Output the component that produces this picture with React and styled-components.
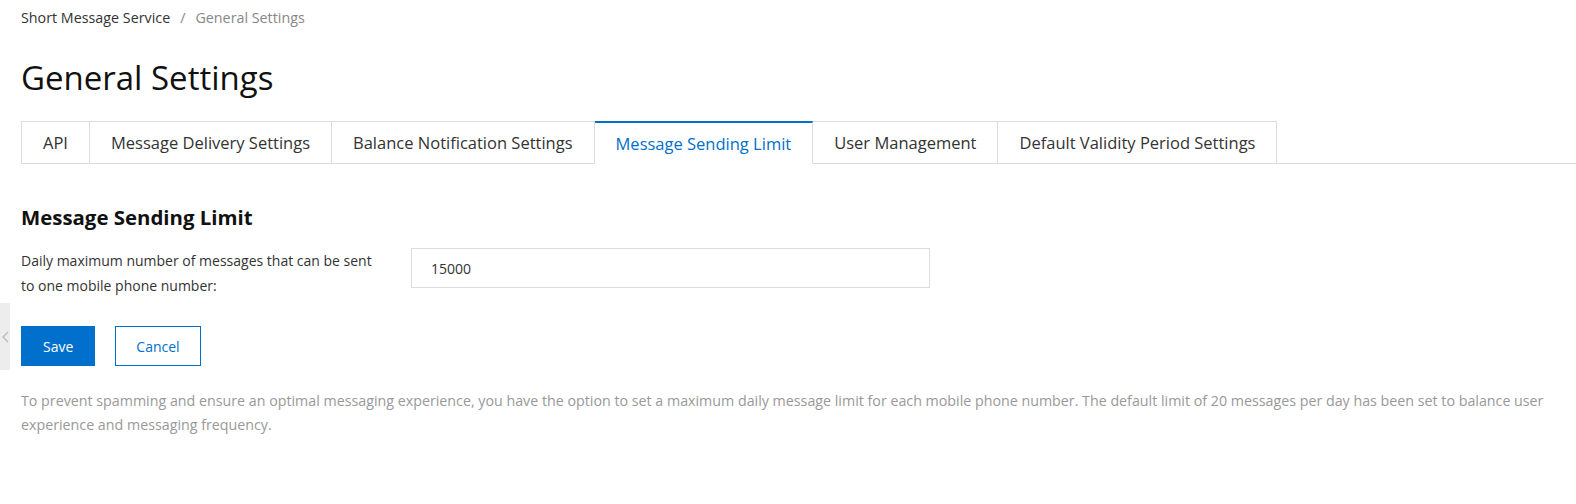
import React, { useState } from 'react';
import styled, { createGlobalStyle } from 'styled-components';

const GlobalStyle = createGlobalStyle`
    html, body {
        margin: 0;
        padding: 0;
        background: #fff;
    }
    body {
        font-family: "Open Sans", "Noto Sans", sans-serif;
        color: #333;
    }
    * {
        box-sizing: border-box;
    }
`

const tabs = [
    'API',
    'Message Delivery Settings',
    'Balance Notification Settings',
    'Message Sending Limit',
    'User Management',
    'Default Validity Period Settings',
];

export default function App() {
    const [active, setActive] = useState(3);
    const [limit, setLimit] = useState('15000');

    return (
        <Page>
            <GlobalStyle />
            <Breadcrumb>
                <span className="link">Short Message Service</span>
                <span className="sep">/</span>
                <span className="current">General Settings</span>
            </Breadcrumb>
            <Title>General Settings</Title>
            <TabBar>
                {tabs.map((t, i) => (
                    <Tab key={t} $active={i === active} $first={i === 0} onClick={() => setActive(i)}>
                        {t}
                    </Tab>
                ))}
                <TabFill />
            </TabBar>
            <Section>
                <SectionTitle>Message Sending Limit</SectionTitle>
                <FormRow>
                    <Label>
                        Daily maximum number of messages that can be sent
                        to one mobile phone number:
                    </Label>
                    <Input value={limit} onChange={e => setLimit(e.target.value)} />
                </FormRow>
                <Actions>
                    <Button $primary>Save</Button>
                    <Button>Cancel</Button>
                </Actions>
                <Hint>
                    To prevent spamming and ensure an optimal messaging experience, you have the option to set a maximum daily message limit for each mobile phone number. The default limit of 20 messages per day has been set to balance user experience and messaging frequency.
                </Hint>
            </Section>
            <SideHandle>
                <svg width="8" height="12" viewBox="0 0 8 12">
                    <path d="M6 1 L1 6 L6 11" fill="none" stroke="#bbb" strokeWidth="1.4" />
                </svg>
            </SideHandle>
        </Page>
    );
}

const Page = styled.div`
    position: relative;
    width: 1576px;
    height: 504px;
    padding: 8px 21px 0 21px;
    overflow: hidden;
`
const Breadcrumb = styled.div`
    font-size: 14.3px;
    line-height: 20px;
    display: flex;
    .link {
        color: #333;
    }
    .sep {
        margin: 0 10px;
        color: #888;
    }
    .current {
        color: #888;
    }
`
const Title = styled.h1`
    margin: 28px 0 0 0;
    font-size: 33px;
    font-weight: 400;
    line-height: 44px;
    color: #111;
`
const TabBar = styled.div`
    display: flex;
    margin-top: 21px;
    margin-right: -21px;
`
const Tab = styled.div`
    height: 43px;
    padding: 0 21px;
    display: flex;
    align-items: center;
    font-size: 16.5px;
    white-space: nowrap;
    color: ${props => props.$active ? '#0070cc' : '#333'};
    background: #fff;
    border-top: ${props => props.$active ? '2px solid #0070cc' : '1px solid #dcdcdc'};
    border-right: 1px solid #dcdcdc;
    border-bottom: 1px solid ${props => props.$active ? '#fff' : '#dcdcdc'};
    border-left: ${props => props.$first ? '1px solid #dcdcdc' : '0'};
    cursor: pointer;
`
const TabFill = styled.div`
    flex: 1;
    border-bottom: 1px solid #dcdcdc;
`
const Section = styled.div`
    padding-top: 39px;
`
const SectionTitle = styled.h2`
    margin: 0;
    font-size: 20.4px;
    font-weight: 700;
    line-height: 28px;
    color: #111;
`
const FormRow = styled.div`
    display: flex;
    align-items: flex-start;
    margin-top: 17px;
`
const Label = styled.div`
    width: 390px;
    flex-shrink: 0;
    padding-right: 32px;
    font-size: 14px;
    line-height: 25px;
    color: #333;
`
const Input = styled.input`
    width: 519px;
    height: 40px;
    padding: 0 19px;
    border: 1px solid #dcdcdc;
    font-family: inherit;
    font-size: 14px;
    color: #333;
    outline: none;
`
const Actions = styled.div`
    display: flex;
    gap: 20px;
    margin-top: 28px;
`
const Button = styled.button`
    height: 40px;
    padding: 0 ${props => props.$primary ? '21px' : '20px'};
    font-family: inherit;
    font-size: 14px;
    border: 1px solid #0070cc;
    background: ${props => props.$primary ? '#0070cc' : '#fff'};
    color: ${props => props.$primary ? '#fff' : '#0070cc'};
    cursor: pointer;
`
const Hint = styled.p`
    margin: 23px 0 0 0;
    font-size: 14.25px;
    line-height: 24px;
    color: #999;
`
const SideHandle = styled.div`
    position: absolute;
    left: 0;
    top: 303px;
    width: 10px;
    height: 67px;
    background: #ededed;
    display: flex;
    align-items: center;
    justify-content: flex-end;
    overflow: hidden;
    svg {
        flex-shrink: 0;
    }
`
